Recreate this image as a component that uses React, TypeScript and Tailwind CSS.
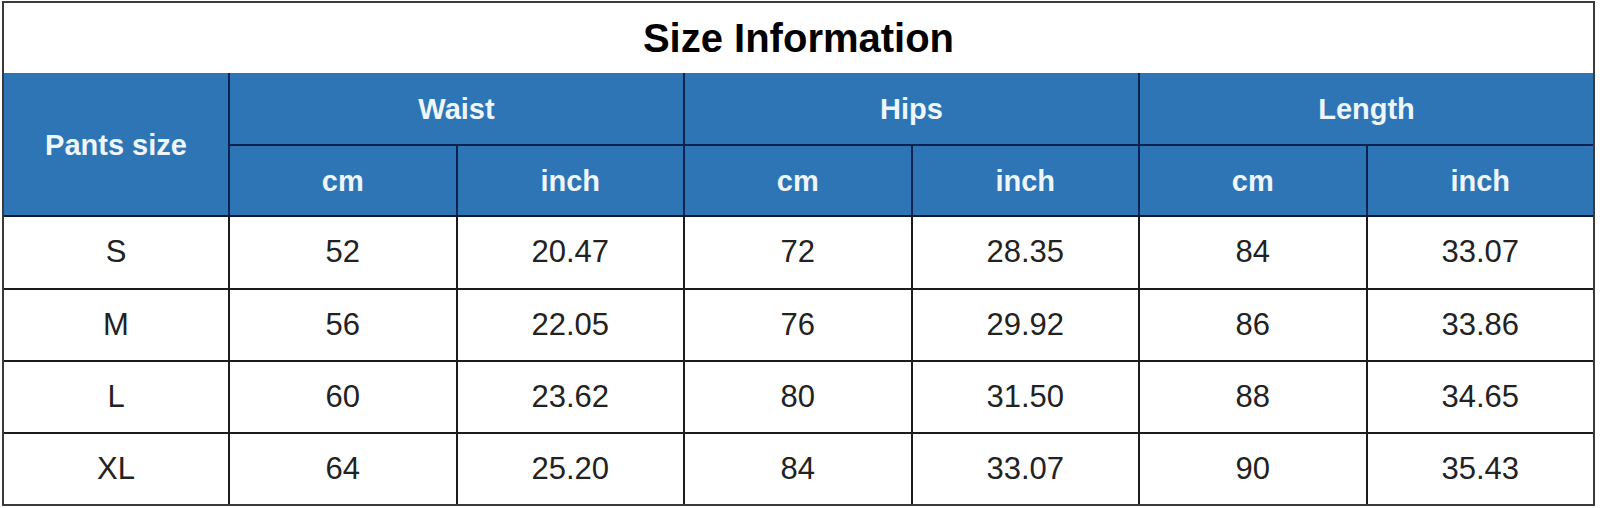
import React from 'react';

// Size chart rows: [size, waist cm, waist inch, hips cm, hips inch, length cm, length inch]
const rows: string[][] = [
  ['S', '52', '20.47', '72', '28.35', '84', '33.07'],
  ['M', '56', '22.05', '76', '29.92', '86', '33.86'],
  ['L', '60', '23.62', '80', '31.50', '88', '34.65'],
  ['XL', '64', '25.20', '84', '33.07', '90', '35.43'],
];

const headCell =
  'bg-[#2e75b6] text-[#eef6fb] font-bold text-[29px] pt-[3px] flex items-center justify-center';

export default function App() {
  return (
    <div
      className="w-[1600px] h-[508px] bg-white pt-[1px] pl-[2px]"
      style={{ fontFamily: '"Liberation Sans", Arial, sans-serif' }}
    >
      <div className="w-[1593px] h-[505px] border-2 border-[#3a3a3a] flex flex-col">
        {/* Title */}
        <div className="h-[70px] flex items-center justify-center text-[40px] font-bold text-black leading-none">
          Size Information
        </div>

        {/* Header */}
        <div className="grid grid-cols-[224px_repeat(6,1fr)] grid-rows-[71px_69px] gap-[2px] bg-[#0c2352] border-b-2 border-[#0c1a33]">
          <div className={`${headCell} row-span-2`}>Pants size</div>
          <div className={`${headCell} col-span-2`}>Waist</div>
          <div className={`${headCell} col-span-2`}>Hips</div>
          <div className={`${headCell} col-span-2`}>Length</div>
          {['cm', 'inch', 'cm', 'inch', 'cm', 'inch'].map((u, i) => (
            <div key={i} className={headCell}>
              {u}
            </div>
          ))}
        </div>

        {/* Data rows */}
        <div className="grid grid-cols-[224px_repeat(6,1fr)] grid-rows-[71px_70px_70px_70px] gap-[2px] bg-[#1c1c1c]">
          {rows.map((r) =>
            r.map((v, j) => (
              <div
                key={r[0] + j}
                className="bg-white flex items-center justify-center text-[31px] text-[#222222]"
              >
                {v}
              </div>
            ))
          )}
        </div>
      </div>
    </div>
  );
}
